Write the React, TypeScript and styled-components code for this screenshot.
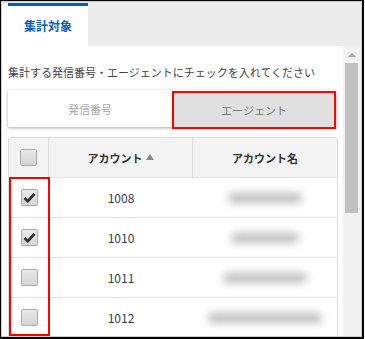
import React from "react";
import styled, { createGlobalStyle } from "styled-components";

const GlobalStyle = createGlobalStyle`
  html, body { margin: 0; padding: 0; background: #fff; }
  body { font-family: "Noto Sans CJK JP", "Noto Sans", sans-serif; color: #333; }
  * { box-sizing: border-box; }
`;

const Frame = styled.div`
  width: 364px;
  height: 339px;
  border: 1px solid #000;
  border-right-width: 2px;
  border-bottom-width: 2px;
  overflow: hidden;
`;

const Panel = styled.div`
  height: 100%;
  border: 1px solid #cfcfcf;
  display: grid;
  grid-template-rows: 44px 1fr;
  overflow: hidden;
`;

const TabBar = styled.div`
  display: flex;
  border-top: 1px solid #e6e6e6;
  padding-left: 6px;
  background: #fff;
`;

const Tab = styled.div`
  width: 80px;
  background: #fff;
  border-top: 3px solid #0a5cb8;
  display: flex;
  align-items: center;
  justify-content: center;
  padding-bottom: 2px;
  font-size: 12px;
  font-weight: 700;
  color: #0a5cb8;
`;

const TabFiller = styled.div`
  flex: 1;
  background: #ececec;
`;

const Body = styled.div`
  display: grid;
  grid-template-columns: 1fr 18px;
  overflow: hidden;
`;

const Content = styled.div`
  padding: 18px 5px 0 6px;
  background: #fff;
  overflow: hidden;
`;

const Instruction = styled.p`
  margin: 0;
  font-size: 11px;
  line-height: 16px;
  color: #444;
  white-space: nowrap;
`;

const Toggle = styled.div`
  margin: 10px 2px 10px 0;
  height: 37px;
  display: grid;
  grid-template-columns: 1fr 1fr;
  box-shadow: 0 1px 3px rgba(0, 0, 0, 0.35);
  background: #fff;
`;

const ToggleButton = styled.div<{ $active?: boolean }>`
  display: flex;
  align-items: center;
  justify-content: center;
  font-size: 11px;
  color: ${(p) => (p.$active ? "#777" : "#a8a8a8")};
  background: ${(p) => (p.$active ? "#e0e0e0" : "#fff")};
  border: ${(p) => (p.$active ? "2px solid #f00" : "none")};
  margin-top: ${(p) => (p.$active ? "1px" : "0")};
  height: ${(p) => (p.$active ? "38px" : "37px")};
`;

const Table = styled.div`
  border: 1px solid #dcdcdc;
  border-bottom: none;
  border-radius: 4px 4px 0 0;
  overflow: hidden;
`;

const Row = styled.div<{ $head?: boolean }>`
  display: grid;
  grid-template-columns: 40px 144px 1fr;
  height: 40px;
  background: ${(p) => (p.$head ? "#f3f3f3" : "#fff")};
  border-bottom: 1px solid #e2e2e2;
`;

const Cell = styled.div<{ $head?: boolean; $sep?: boolean }>`
  display: flex;
  align-items: center;
  justify-content: center;
  font-size: ${(p) => (p.$head ? "11px" : "12px")};
  font-weight: ${(p) => (p.$head ? 600 : 400)};
  color: ${(p) => (p.$head ? "#333" : "#3a3a4a")};
  border-right: ${(p) => (p.$sep ? "1px solid #dcdcdc" : "none")};
`;

const SortArrow = styled.span`
  margin-left: 3px;
  width: 0;
  height: 0;
  border-left: 4.5px solid transparent;
  border-right: 4.5px solid transparent;
  border-bottom: 6px solid #888;
  margin-bottom: 2px;
`;

const Box = styled.div`
  width: 17px;
  height: 17px;
  border: 1px solid #aaa;
  border-radius: 2px;
  background: linear-gradient(#e9e9e9, #d4d4d4);
  display: flex;
  align-items: center;
  justify-content: center;
`;

const Blur = styled.span`
  display: block;
  height: 10px;
  border-radius: 6px;
  background: #bdbdbd;
  filter: blur(4px);
`;

const BodyRows = styled.div`
  position: relative;
`;

const Highlight = styled.div`
  position: absolute;
  left: 0;
  top: -1px;
  width: 41px;
  height: 159px;
  border: 2px solid #f00;
  pointer-events: none;
`;

const Scrollbar = styled.div`
  background: #f1f1f1;
  display: flex;
  flex-direction: column;
  align-items: center;
  padding-right: 1px;
`;

const ArrowUp = styled.div`
  margin-top: 7px;
  width: 0;
  height: 0;
  border-left: 4px solid transparent;
  border-right: 4px solid transparent;
  border-bottom: 4px solid #a3a3a3;
`;

const Thumb = styled.div`
  margin-top: 6px;
  width: 13px;
  height: 150px;
  background: #c1c1c1;
`;

const Check = () => (
  <svg width="13" height="11" viewBox="0 0 13 11">
    <path d="M1.5 6 L4.8 9.2 L11.5 1.8" fill="none" stroke="#333" strokeWidth="2.8" strokeLinejoin="miter" />
  </svg>
);

const rows = [
  { id: "1008", checked: true, w: 74 },
  { id: "1010", checked: true, w: 68 },
  { id: "1011", checked: false, w: 84 },
  { id: "1012", checked: false, w: 114 },
];

export default function App() {
  return (
    <>
      <GlobalStyle />
      <Frame>
        <Panel>
          <TabBar>
            <Tab>集計対象</Tab>
            <TabFiller />
          </TabBar>
          <Body>
            <Content>
              <Instruction>集計する発信番号・エージェントにチェックを入れてください</Instruction>
              <Toggle>
                <ToggleButton>発信番号</ToggleButton>
                <ToggleButton $active>エージェント</ToggleButton>
              </Toggle>
              <Table>
                <Row $head>
                  <Cell $head $sep>
                    <Box />
                  </Cell>
                  <Cell $head $sep>
                    アカウント
                    <SortArrow />
                  </Cell>
                  <Cell $head>アカウント名</Cell>
                </Row>
                <BodyRows>
                  {rows.map((r) => (
                    <Row key={r.id}>
                      <Cell>
                        <Box>{r.checked && <Check />}</Box>
                      </Cell>
                      <Cell>{r.id}</Cell>
                      <Cell>
                        <Blur style={{ width: r.w }} />
                      </Cell>
                    </Row>
                  ))}
                  <Highlight />
                </BodyRows>
              </Table>
            </Content>
            <Scrollbar>
              <ArrowUp />
              <Thumb />
            </Scrollbar>
          </Body>
        </Panel>
      </Frame>
    </>
  );
}
